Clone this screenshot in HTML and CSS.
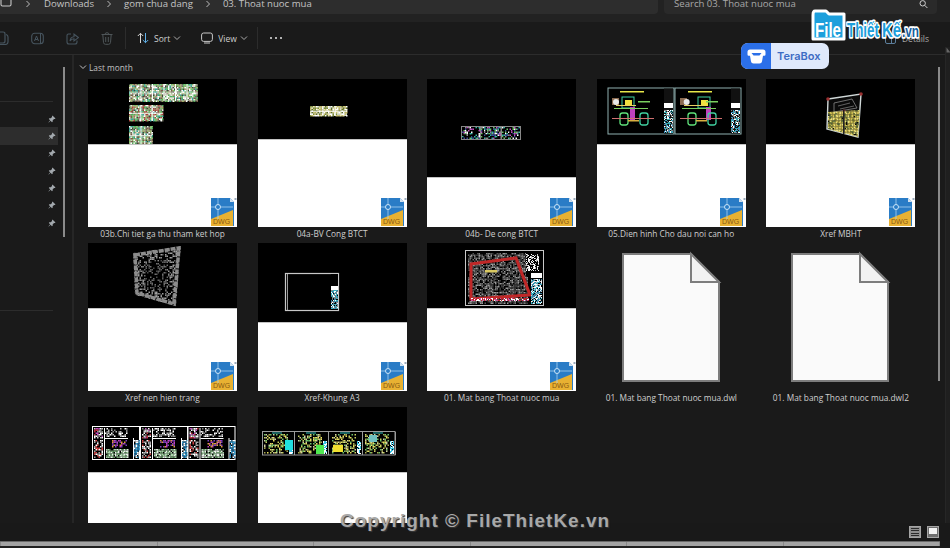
FILE: index.html
```html
<!DOCTYPE html>
<html lang="en">
<head>
  <meta charset="UTF-8" />
  <title>03. Thoat nuoc mua</title>
  <link rel="stylesheet" href="styles.css">
</head>
<body>

  <svg class="defs" width="0" height="0">
    <symbol id="pin" viewBox="0 0 10 10">
      <path d="M5.6 .6 9.4 4.4 8.5 5 7.6 4.9 5.9 6.6 5.8 8.4 5 9 3.2 7.1 1 9.4 .6 9 2.8 6.7 1 5 1.6 4.2 3.4 4.1 5.1 2.4 5 1.5Z" fill="#a2a8ad"/>
    </symbol>
    <symbol id="chev-down" viewBox="0 0 8 8">
      <path d="M1 2.5 4 5.5 7 2.5" fill="none" stroke="currentColor" stroke-width="1"/>
    </symbol>
    <symbol id="chev-right" viewBox="0 0 8 8">
      <path d="M2.5 1 5.5 4 2.5 7" fill="none" stroke="currentColor" stroke-width="1"/>
    </symbol>
  </svg>

  <header class="topbar">
    <div class="address">
      <svg class="pc" width="12" height="9" viewBox="0 0 12 9"><path d="M1 0V4.5Q1 6 2.5 6H9.500Q11 6 11 4.500V0" fill="none" stroke="#c8c8c8" stroke-width="1.100"/></svg>
      <svg class="crumb-sep" width="8" height="8"><use href="#chev-right"/></svg>
      <span class="crumb">Downloads</span>
      <svg class="crumb-sep" width="8" height="8"><use href="#chev-right"/></svg>
      <span class="crumb">gom chua dang</span>
      <svg class="crumb-sep" width="8" height="8"><use href="#chev-right"/></svg>
      <span class="crumb">03. Thoat nuoc mua</span>
    </div>
    <div class="search">
      <span>Search 03. Thoat nuoc mua</span>
      <svg width="9" height="9" viewBox="0 0 9 9"><circle cx="3.700" cy="3.300" r="2.700" fill="none" stroke="#d0d0d0"/><path d="M5.700 5.300 8.400 8" stroke="#d0d0d0"/></svg>
    </div>
  </header>

  <nav class="toolbar">
    <svg class="tool-dim tool-copy" width="10" height="14" viewBox="0 0 10 14"><path d="M-2 1H3Q5 1 5 3V10Q5 12 3 12H-2M6 3.500Q8 4 8 6V11Q8 13.500 5 13.500H0" fill="none" stroke="#46545e" stroke-width="1.200"/></svg>
    <svg class="tool-dim tool-rename" width="13" height="13" viewBox="0 0 13 13"><rect x=".7" y="1.200" width="11.600" height="10.600" rx="3" fill="none" stroke="#46545e" stroke-width="1.100"/><path d="M3.500 9 5.500 4 7.500 9M4.200 7.500H6.800M9.500 1V12" fill="none" stroke="#46545e"/></svg>
    <svg class="tool-dim tool-share" width="13" height="13" viewBox="0 0 13 13"><path d="M5 2H2.500Q1 2 1 3.500V10Q1 12 3 12H9Q11 12 11 10V8.500M4 9Q4.500 5 8 4.800V2.200L12.400 5.600 8 9V6.700Q5.500 6.700 4 9Z" fill="none" stroke="#46545e" stroke-width="1.100"/></svg>
    <svg class="tool-dim tool-delete" width="12" height="13" viewBox="0 0 12 13"><path d="M.5 2.500H11.500M4 2.500Q4 .7 6 .7T8 2.500M1.800 2.500 2.500 10.500Q2.700 12.300 4.500 12.300H7.500Q9.300 12.300 9.500 10.500L10.200 2.500M4.700 5V10M7.300 5V10" fill="none" stroke="#4e5558" stroke-width="1"/></svg>
    <span class="tool-sep tool-sep-first"></span>
    <button class="tool-btn tool-sort">
      <svg width="12" height="12" viewBox="0 0 12 12"><path d="M3.500 11V1.300M.8 4 3.500 1.300 6.200 4" fill="none" stroke="#d8d8d8"/><path d="M8.500 1V10.700M5.800 8 8.500 10.700 11.200 8" fill="none" stroke="#5fb0e8"/></svg>
      <span>Sort</span>
      <svg class="mini" width="8" height="8"><use href="#chev-down"/></svg>
    </button>
    <button class="tool-btn tool-view">
      <svg width="12" height="12" viewBox="0 0 12 12"><rect x=".6" y="1" width="10.800" height="8.400" rx="2" fill="none" stroke="#c8c8c8"/><path d="M3 11H9" stroke="#c8c8c8"/></svg>
      <span>View</span>
      <svg class="mini" width="8" height="8"><use href="#chev-down"/></svg>
    </button>
    <span class="tool-sep tool-sep-second"></span>
    <span class="tool-more"><i></i><i></i><i></i></span>
    <span class="tool-details">
      <svg width="11" height="10" viewBox="0 0 11 10"><rect x=".5" y=".5" width="10" height="9" rx="1.500" fill="none" stroke="#5d7f9c"/><path d="M6.500 .5V9.500" stroke="#5d7f9c"/></svg>
      <span>Details</span>
    </span>
  </nav>

  <div class="content">
    <aside class="sidebar">
      <div class="side-divider side-divider-top"></div>
      <ul class="pins">
        <li><svg width="8" height="8"><use href="#pin"/></svg></li>
        <li class="is-active"><svg width="8" height="8"><use href="#pin"/></svg></li>
        <li><svg width="8" height="8"><use href="#pin"/></svg></li>
        <li><svg width="8" height="8"><use href="#pin"/></svg></li>
        <li><svg width="8" height="8"><use href="#pin"/></svg></li>
        <li><svg width="8" height="8"><use href="#pin"/></svg></li>
        <li><svg width="8" height="8"><use href="#pin"/></svg></li>
      </ul>
      <div class="side-divider side-divider-bottom"></div>
      <div class="side-scroll"></div>
    </aside>

    <main class="files">
      <h2 class="group-title">
        <svg width="8" height="8"><use href="#chev-down"/></svg>
        Last month
      </h2>
      <div class="grid" id="grid"></div>
      <div class="files-scroll"></div>
    </main>

    <div class="edge">
      <svg width="5" height="6" viewBox="0 0 5 6"><path d="M.5 5.500V.5L4.500 5.500Z" fill="#666"/></svg>
    </div>
  </div>

  <footer class="statusbar">
    <span class="view-toggle view-list"><i></i><i></i><i></i><i></i></span>
    <span class="view-toggle view-thumb"><b></b></span>
  </footer>

  <div class="bottom-strip">
    <i></i><i></i><i></i><i></i><i></i><i></i><i></i>
  </div>

  <!-- overlays stamped on top of the screenshot -->
  <svg class="logo" width="110" height="34" viewBox="0 0 110 34">
    <path d="M2 7V31H33V6H18L15 3H4Q2 3 2 7Z" fill="#1c9fdc" stroke="#fff" stroke-width="3" stroke-linejoin="round"/>
    <text class="logo-file" x="4" y="29" textLength="26" lengthAdjust="spacingAndGlyphs">File</text>
    <text class="logo-word" x="36" y="29" textLength="32" lengthAdjust="spacingAndGlyphs">Thiết</text>
    <text class="logo-word" x="71" y="29" textLength="19" lengthAdjust="spacingAndGlyphs">Kế</text>
    <text class="logo-vn" x="91" y="29" textLength="17" lengthAdjust="spacingAndGlyphs">.vn</text>
  </svg>

  <div class="terabox">
    <span class="terabox-icon">
      <svg width="19" height="15" viewBox="0 0 19 15"><path d="M3 .5H16Q18.500 .5 18.500 3V5.500Q18.500 6.800 17.300 6.800H16L15 12.500Q14.700 14.500 12.500 14.500H6.500Q4.300 14.500 4 12.500L3 6.800H1.700Q.5 6.800 .5 5.500V3Q.5 .5 3 .5Z" fill="#fff"/><path d="M4.500 4H14.500L12.500 6.500H6.500Z" fill="#2b6fe8"/></svg>
    </span>
    <span class="terabox-name">TeraBox</span>
  </div>

  <div class="copyright">Copyright © FileThietKe.vn</div>

  <script src="script.js"></script>
</body>
</html>
```

FILE: styles.css
```css
* {
  box-sizing: border-box;
}

body {
  font-family: 'Open Sans', 'Noto Sans', sans-serif;
  background-color: #1a1a1a;
  color: #d4d4d4;
  margin: 0;
  width: 950px;
  height: 548px;
  overflow: hidden;
  position: relative;
  display: flex;
  flex-direction: column;
}

.defs {
  position: absolute;
}

/* top row */
.topbar {
  height: 22px;
  flex: none;
  background-color: #222222;
  display: flex;
  gap: 6px;
  padding-right: 13px;
}

.address {
  width: 658px;
  height: 14px;
  background-color: #2d2d2d;
  border-radius: 0 0 4px 0;
  display: flex;
  align-items: flex-start;
  font-size: 9.600px;
  line-height: 8px;
  color: #c4c4c4;
}

.crumb-sep {
  color: #bbbbbb;
  margin: 0 11px;
}

.pc + .crumb-sep {
  margin: 0 12px;
}

.search {
  flex: 1;
  height: 14px;
  background-color: #2a2a2a;
  border-radius: 0 0 4px 4px;
  font-size: 9.600px;
  line-height: 8px;
  color: #a8a8a8;
  display: flex;
  justify-content: space-between;
  padding: 0 9px 0 10px;
}

/* toolbar */
.toolbar {
  height: 33px;
  flex: none;
  border-bottom: 1px solid #2c2c2c;
  display: flex;
  align-items: center;
  font-size: 8.500px;
  color: #cfcfcf;
}

.tool-dim {
  flex: none;
}

.tool-rename {
  margin-left: 21px;
}

.tool-share {
  margin-left: 22px;
}

.tool-delete {
  margin-left: 22px;
}

.tool-sep {
  width: 1px;
  height: 22px;
  background-color: #2c2c2c;
}

.tool-sep-first {
  margin-left: 12px;
}

.tool-btn {
  background: none;
  border: none;
  color: inherit;
  font: inherit;
  padding: 0;
  display: flex;
  align-items: center;
}

.tool-btn span {
  margin-left: 5px;
}

.tool-btn .mini {
  margin-left: 3px;
  color: #aaaaaa;
}

.tool-sort {
  margin-left: 11px;
}

.tool-view {
  margin-left: 20px;
}

.tool-sep-second {
  margin-left: 9px;
}

.tool-more {
  margin-left: 12px;
  display: flex;
  gap: 2.500px;
}

.tool-more i {
  width: 2.500px;
  height: 2.500px;
  border-radius: 50%;
  background-color: #e4e4e4;
}

.tool-details {
  margin-left: auto;
  margin-right: 21px;
  margin-top: 1px;
  display: flex;
  align-items: center;
  gap: 6px;
  color: #a9a9a9;
}

/* sidebar + files */
.content {
  flex: 1;
  min-height: 0;
  display: flex;
}

.sidebar {
  width: 74px;
  flex: none;
  border-right: 2px solid #262626;
  position: relative;
  padding-top: 46px;
}

.side-divider {
  height: 1px;
  width: 53px;
  background-color: #2c2c2c;
}

.pins {
  list-style: none;
  margin: 8px 0 0;
  padding: 0;
  width: 58px;
}

.pins li {
  height: 17.330px;
  display: flex;
  align-items: center;
  justify-content: flex-end;
  padding-right: 2px;
}

.pins li.is-active {
  background-color: #2d2d2d;
}

.side-divider-bottom {
  margin-top: 79px;
}

.side-scroll {
  position: absolute;
  left: 63px;
  top: 12px;
  width: 2px;
  height: 170px;
  background-color: #8a8a8a;
}

.files {
  flex: 1;
  min-width: 0;
  position: relative;
  overflow: hidden;
  padding-left: 4px;
}

.group-title {
  height: 24px;
  margin: 0;
  padding-left: 1px;
  font-size: 8.300px;
  font-weight: 400;
  color: #c0c0c0;
  display: flex;
  align-items: center;
  gap: 2px;
}

.grid {
  display: grid;
  grid-template-columns: repeat(5, 169.600px);
  grid-auto-rows: 164px;
}

.card {
  width: 149px;
  margin-left: 10px;
}

.thumb {
  width: 149px;
  height: 148px;
  position: relative;
  background-color: #ffffff;
  display: block;
}

.thumb .art {
  filter: blur(0.6px);
}

.plain-file {
  width: 149px;
  height: 148px;
  display: block;
}

.caption {
  display: block;
  width: 149px;
  margin-top: -1px;
  padding-top: 1px;
  height: 14px;
  line-height: 13px;
  text-align: center;
  font-size: 8.300px;
  color: #cfcfcf;
  white-space: nowrap;
}

.dwg-label {
  font-family: 'Liberation Sans', sans-serif;
  font-size: 7px;
  fill: #8a5a12;
}

.files-scroll {
  position: absolute;
  left: 864px;
  top: 12px;
  width: 2px;
  height: 314px;
  background-color: #8a8a8a;
}

.edge {
  width: 5px;
  flex: none;
  background-color: #1f1f1f;
  border-left: 1px solid #262626;
  margin-top: -8px;
}

.edge svg {
  display: block;
}

/* bottom */
.statusbar {
  height: 18px;
  flex: none;
  background-color: #191919;
  display: flex;
  align-items: center;
  justify-content: flex-end;
  gap: 6px;
  padding-right: 11px;
}

.view-toggle {
  width: 12px;
  height: 12px;
  background-color: #8f8f8f;
  border: 1px solid #a5a5a5;
}

.view-list {
  display: flex;
  flex-direction: column;
  justify-content: space-evenly;
  padding: 0 1px;
}

.view-list i {
  display: block;
  height: 1px;
  background-color: #2b2b2b;
}

.view-thumb {
  padding: 1px 1px 3px;
  background-color: #6e6e6e;
}

.view-thumb b {
  display: block;
  height: 100%;
  background-color: #f2f2f2;
}

.bottom-strip {
  height: 7px;
  flex: none;
  margin-right: 10px;
  background-color: #a4a4a4;
  border-top: 1px solid #6a6a6a;
  border-bottom: 2px solid #222222;
  display: flex;
  justify-content: space-between;
}

.bottom-strip i {
  width: 1px;
  background-color: #8a8a8a;
}

/* stamped overlays */
.logo {
  position: absolute;
  left: 811px;
  top: 8px;
}

.logo text {
  font-family: 'Liberation Sans', sans-serif;
  font-weight: 700;
  font-size: 21px;
  paint-order: stroke;
  stroke-linejoin: round;
}

.logo .logo-file {
  fill: #ffffff;
}

.logo .logo-word {
  fill: #1c9fdc;
  stroke: #ffffff;
  stroke-width: 3.500px;
}

.logo .logo-vn {
  fill: #14609e;
  stroke: #ffffff;
  stroke-width: 3.500px;
  font-size: 17px;
}

.terabox {
  position: absolute;
  left: 741px;
  top: 43px;
  width: 88px;
  height: 26px;
  border-radius: 7px;
  overflow: hidden;
  background-color: #dfe9fb;
  display: flex;
  align-items: center;
}

.terabox-icon {
  width: 30px;
  height: 100%;
  background-color: #2b6fe8;
  display: flex;
  align-items: center;
  justify-content: center;
}

.terabox-name {
  margin-left: 6px;
  font-family: 'Inter', sans-serif;
  font-size: 11px;
  font-weight: 600;
  color: #3d6cc4;
}

.copyright {
  position: absolute;
  left: 340px;
  top: 510px;
  font-family: 'Liberation Sans', sans-serif;
  font-size: 19px;
  font-weight: 700;
  letter-spacing: 1px;
  color: #a8a8a8;
  text-shadow: 1px 1px 1px #3a3a3a;
  white-space: nowrap;
}
```

FILE: script.js
```js
// seeded so every render gives the same specks
let seed = 7;
function rnd() {
  seed = (seed * 16807) % 2147483647;
  return seed / 2147483647;
}

function noise(x, y, w, h, colors, cell = 1, fill = 0.7) {
  let out = "";
  for (let j = 0; j < h; j += cell) {
    for (let i = 0; i < w; i += cell) {
      if (rnd() > fill) continue;
      const c = colors[Math.floor(rnd() * colors.length)];
      out += `<rect x="${x + i}" y="${y + j}" width="${cell}" height="${cell}" fill="${c}"/>`;
    }
  }
  return out;
}

function frame(x, y, w, h, color, sw = 1) {
  return `<rect x="${x}" y="${y}" width="${w}" height="${h}" fill="none" stroke="${color}" stroke-width="${sw}"/>`;
}

const busy = ["#ffffff", "#e4e8dc", "#6fc46a", "#4fb05a", "#8fae60", "#a8a070", "#6a6a5a", "#7a5a48", "#39a595", "#3a4a3a"];
const rust = busy.concat(["#a8443c", "#a8443c", "#b8685a"]);

// block of drawing sheets, light background with coloured blotches
function sheets(x, y, w, h, cols, colors) {
  let out = `<rect x="${x}" y="${y}" width="${w}" height="${h}" fill="#c8d0c0"/>` + noise(x, y, w, h, colors, 1.500, 0.95);
  for (let i = 1; i < cols; i++) {
    out += `<rect x="${x + i * w / cols}" y="${y}" width="1" height="${h}" fill="#fff"/>`;
  }
  return out + `<rect x="${x}" y="${y + h / 2}" width="${w}" height="1" fill="#fff" fill-opacity=".7"/>`;
}

function artSheets() {
  return sheets(41, 5, 69, 17, 6, busy) + sheets(41, 26, 34, 16, 3, rust) + sheets(41, 47, 23, 18, 2, busy);
}

function artSmall() {
  return sheets(52, 27, 37, 10, 3, ["#c8c070", "#e8e4b0", "#7a8a3a", "#ffffff", "#5a6a30", "#b8b060"]);
}

function artThree() {
  const pal = ["#6fc46a", "#ffffff", "#8a8a8a", "#39b5a5", "#c050c0", "#3a4a9a", "#000000", "#000000", "#000000"];
  return frame(34.500, 47.500, 18, 13, "#888") + frame(53.500, 47.500, 20, 13, "#888") + frame(74.500, 47.500, 19, 13, "#888") +
    noise(35, 48, 17, 12, pal, 1.500, 0.8) + noise(54, 48, 19, 12, pal, 1.500, 0.8) + noise(75, 48, 18, 12, pal, 1.500, 0.8);
}

function sheetDetail(x, flip) {
  const c = flip ? 8 : 0;
  return `
    <rect x="${x + 12}" y="${12}" width="24" height="1.500" fill="#e8e84a"/>
    <rect x="${x + 14 + c}" y="${18}" width="12" height="11" fill="none" stroke="#3fd0a0" stroke-width="1"/>
    <rect x="${x + 17 + c}" y="${21}" width="7" height="6" fill="#f0e040"/>
    <rect x="${x + 4}" y="${19}" width="7" height="7" fill="#8a6a50"/>
    <circle cx="${x + 8 + c / 3}" cy="${23}" r="3" fill="#e8e8e8"/>
    <rect x="${x + 22 + c}" y="${28}" width="5" height="13" fill="#c040c0"/>
    <rect x="${x + 6}" y="${29}" width="34" height="1" fill="#7ad060"/>
    <rect x="${x + 30}" y="${22}" width="12" height="1.500" fill="#7ad060"/>
    <rect x="${x + 8}" y="${26}" width="20" height="1" fill="#e8d060"/>
    <rect x="${x + 12}" y="${34}" width="8" height="12" rx="2.500" fill="none" stroke="#5fe07a" stroke-width="1.300"/>
    <rect x="${x + 32}" y="${34}" width="8" height="12" rx="2.500" fill="none" stroke="#40d0a0" stroke-width="1.300"/>
    <rect x="${x + 4}" y="${39}" width="42" height="1" fill="#d07070"/>
    <rect x="${x + 20}" y="${41}" width="11" height="1.500" fill="#d8b040"/>`;
}

function artDetail() {
  const title = ["#ffffff", "#3a90c0", "#38b0b0", "#888888"];
  return frame(11, 9, 66, 46, "#8fb0b0") + frame(78, 9, 66, 46, "#8fb0b0") +
    sheetDetail(11, false) + sheetDetail(79, true) +
    `<rect x="67" y="9.500" width="9" height="45" fill="#111"/><rect x="134" y="9.500" width="9" height="45" fill="#111"/>
     <rect x="67" y="24" width="9" height="5" fill="#fff"/><rect x="134" y="24" width="9" height="5" fill="#fff"/>` +
    noise(67, 31, 9, 23, title, 1, 0.7) + noise(134, 31, 9, 23, title, 1, 0.7);
}

function artSite() {
  return `<defs><clipPath id="siteclip"><polygon points="62,33 94,31 92,58 62,50"/></clipPath></defs>
    <polygon points="62,20 95,15 92,58 61,50" fill="#0a0a0a" stroke="#d0d8d8" stroke-width="1.400"/>
    <path d="M68 24 86 20 91 29 68 33Z" fill="none" stroke="#888" stroke-width=".8"/>
    <path d="M72 27 84 24M74 30 88 27" stroke="#888" stroke-width=".7"/>
    <circle cx="62" cy="20" r="1.800" fill="#9a3030"/><circle cx="95" cy="15" r="1.800" fill="#9a3030"/><circle cx="78" cy="32" r="1.500" fill="#9a3030"/>
    <g clip-path="url(#siteclip)">${noise(62, 31, 32, 27, ["#d8c860", "#a8a040", "#e8e080", "#6a7a40", "#c8b850"], 1.500, 0.95)}</g>
    <rect x="77" y="31" width="1.500" height="24" fill="#222"/>`;
}

function artSurvey() {
  return `<defs><clipPath id="surveyclip"><polygon points="45,10 93,3 88,63 47,52"/></clipPath></defs>
    <g clip-path="url(#surveyclip)">${noise(44, 2, 50, 62, ["#8a8a8a", "#a0a0a0", "#6a6a6a"], 1.500, 0.4)}</g>
    <polygon points="47,12 91,5 86,61 49,50" fill="none" stroke="#8c8c8c" stroke-width="3.500" stroke-dasharray="5 1"/>
    <polygon points="55,20 80,16 78,50 56,44" fill="#000" fill-opacity=".3"/>`;
}

function artFrame() {
  return frame(27.500, 30.500, 53, 37, "#c8c8c8", 1.200) +
    `<rect x="29" y="31" width="1" height="36" fill="#999"/>
     <rect x="73" y="31" width="7" height="36" fill="#000"/>
     <rect x="73" y="43" width="7" height="4" fill="#fff"/>` +
    noise(73, 47, 7, 19, ["#ffffff", "#38b0c0", "#3a80a0", "#888"], 1, 0.8);
}

function artPlan() {
  return frame(38.500, 7.500, 78, 55, "#c8c8c8", 1) +
    noise(41, 10, 60, 50, ["#3a3a3a", "#555555", "#777777", "#999999"], 1.500, 0.7) +
    `<polygon points="44,21 89,15 103,52 44,56" fill="none" stroke="#c02828" stroke-width="3"/>
     <rect x="58" y="27" width="12" height="2.500" fill="#d8c860"/>
     <rect x="99" y="9" width="17" height="24" fill="#000"/>
     <rect x="104" y="30" width="11" height="5" fill="#fff"/>` +
    noise(99, 11, 13, 17, ["#ffffff", "#bbbbbb"], 1, 0.5) +
    noise(104, 36, 11, 25, ["#ffffff", "#38b0c0", "#3a80a0", "#c8c8c8"], 1, 0.85) +
    noise(44, 55, 58, 3, ["#d050a0", "#ffffff", "#c02828"], 1, 0.8);
}

function wideSheet(x) {
  const pal = ["#ffffff", "#c050c0", "#8a8a8a", "#c03040", "#cccccc"];
  return frame(x + 0.5, 19.500, 47, 33, "#ffffff", 1) +
    noise(x + 2, 21, 9, 10, pal, 1.500, 0.7) + noise(x + 2, 33, 9, 18, ["#ffffff", "#aaaaaa", "#d04040"], 1.500, 0.55) +
    noise(x + 13, 21, 22, 8, ["#ffffff", "#888888", "#bbbbbb"], 1.500, 0.5) +
    `<rect x="${x + 13}" y="31" width="23" height="1" fill="#fff"/>
     <rect x="${x + 12}" y="21" width="1" height="31" fill="#fff"/>` +
    noise(x + 20, 33, 14, 7, ["#c040c0", "#8040c0", "#e0a040"], 1.500, 0.55) +
    noise(x + 14, 42, 22, 9, ["#a8d0a8", "#e8f0e8", "#6a9a6a"], 1.500, 0.9) +
    `<rect x="${x + 41}" y="31" width="1" height="21" fill="#fff"/>` +
    noise(x + 42, 33, 5, 18, ["#ffffff", "#38a0d0", "#2a70a0"], 1.500, 0.9);
}

function artWide() {
  return wideSheet(4) + wideSheet(52) + wideSheet(99.500);
}

function artGreen() {
  const pal = ["#c8d060", "#e8e060", "#6fc46a", "#d0d0a0", "#a8a850"];
  let out = frame(4.500, 24.500, 132.500, 23.500, "#9a9a9a", 1);
  [4, 38, 72, 105].forEach(x => {
    out += noise(x + 2, 27, 23, 19, pal, 1.500, 0.45);
    out += `<rect x="${x + 32}" y="25" width="1" height="23" fill="#9a9a9a"/>`;
    out += noise(x + 27, 34, 4, 13, ["#ffffff", "#38c0e0"], 1, 0.9);
    out += `<rect x="${x + 10}" y="25.500" width="10" height="1" fill="#30c0c0"/>`;
  });
  return out +
    `<rect x="27" y="33" width="8" height="10" fill="#20e0e0"/>
     <rect x="58" y="38" width="8" height="9" fill="#50e850"/>
     <rect x="75" y="38" width="10" height="7" fill="#f0e030"/>
     <rect x="111" y="28" width="8" height="7" fill="#70c0c0"/>`;
}

function dwgBadge() {
  return `<g transform="translate(123,119)">
    <path d="M0 0H19L23 4V28H0Z" fill="#2a7cc6"/>
    <path d="M0 21 22 12V28H0Z" fill="#e8b132"/>
    <path d="M19 0V4H23Z" fill="#cfe0ef"/>
    <path d="M7 0V21M0 9H22" stroke="#a8d0f0" stroke-width=".8"/>
    <circle cx="7" cy="9" r="2.500" fill="#2a7cc6" stroke="#d8ecfa" stroke-width=".9"/>
    <text class="dwg-label" x="2" y="26">DWG</text>
    <rect x="23.500" y="0" width="2" height="2" fill="#9ab"/>
  </g>`;
}

function thumb(item) {
  return `<svg class="thumb" width="149" height="148" viewBox="0 0 149 148">
    <rect width="149" height="${item.black}" fill="#000"/>
    <rect y="${item.black}" width="149" height="1" fill="#c4c4c4"/>
    <g class="art">${item.art()}</g>
    ${dwgBadge()}
  </svg>`;
}

function plainFile() {
  return `<svg class="plain-file" width="149" height="148" viewBox="0 0 149 148">
    <path d="M26 11H94L122 39V138H26Z" fill="#fafafa" stroke="#7d7d7d" stroke-width="2"/>
    <path d="M94 11V39H122Z" fill="#f2f2f2" stroke="#7d7d7d" stroke-width="2"/>
  </svg>`;
}

const archivos = [
  { nombre: "03b.Chi tiet ga thu tham ket hop", black: 65, art: artSheets },
  { nombre: "04a-BV Cong BTCT", black: 60, art: artSmall },
  { nombre: "04b- De cong BTCT", black: 98, art: artThree },
  { nombre: "05.Dien hinh Cho dau noi can ho", black: 65, art: artDetail },
  { nombre: "Xref MBHT", black: 65, art: artSite },
  { nombre: "Xref nen hien trang", black: 65, art: artSurvey },
  { nombre: "Xref-Khung A3", black: 79, art: artFrame },
  { nombre: "01. Mat bang Thoat nuoc mua", black: 65, art: artPlan },
  { nombre: "01. Mat bang Thoat nuoc mua.dwl" },
  { nombre: "01. Mat bang Thoat nuoc mua.dwl2" },
  { nombre: "", black: 65, art: artWide },
  { nombre: "", black: 65, art: artGreen }
];

const grid = document.getElementById("grid");
archivos.forEach(item => {
  const card = document.createElement("div");
  card.className = "card";
  card.innerHTML = `${item.art ? thumb(item) : plainFile()}<span class="caption">${item.nombre}</span>`;
  grid.appendChild(card);
});
```
